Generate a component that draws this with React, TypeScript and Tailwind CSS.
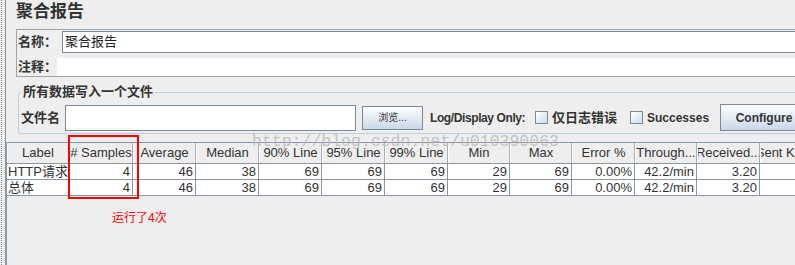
import { FC } from 'react'

interface Column {
    label: string;
    w: string;
    left?: boolean;
}

const columns: Column[] = [
    { label: 'Label', w: 'w-[62px]', left: true },
    { label: '# Samples', w: 'w-[64px]' },
    { label: 'Average', w: 'w-[63px]' },
    { label: 'Median', w: 'w-[63px]' },
    { label: '90% Line', w: 'w-[63px]' },
    { label: '95% Line', w: 'w-[63px]' },
    { label: '99% Line', w: 'w-[63px]' },
    { label: 'Min', w: 'w-[62px]' },
    { label: 'Max', w: 'w-[62px]' },
    { label: 'Error %', w: 'w-[63px]' },
    { label: 'Through...', w: 'w-[62px]' },
    { label: 'Received...', w: 'w-[63px]' },
    { label: 'Sent KB/sec', w: 'w-[63px]' },
];

const rows: string[][] = [
    ['HTTP请求', '4', '46', '38', '69', '69', '69', '29', '69', '0.00%', '42.2/min', '3.20', ''],
    ['总体', '4', '46', '38', '69', '69', '69', '29', '69', '0.00%', '42.2/min', '3.20', ''],
];

const font = "font-['Liberation_Sans','Noto_Sans_CJK_SC',sans-serif]";

const OceanButton: FC<{ label: string; className: string }> = ({ label, className }) => (
    <div
        className={`shrink-0 flex items-center justify-center border border-[#7a8a99] bg-gradient-to-b from-white to-[#c9d7ea] text-[#333] ${className}`}
    >
        {label}
    </div>
);

const CheckBox: FC = () => (
    <div className="shrink-0 w-[13px] h-[13px] border border-[#7a8a99] bg-gradient-to-br from-white to-[#cfdbeb]" />
);

const App: FC = () => {
    return (
        <div className={`relative w-[795px] h-[265px] overflow-hidden bg-[#eeeeee] flex ${font}`}>
            {/* dotted split pane edge */}
            <div className="shrink-0 ml-[1px] w-[4px] h-full border-l border-dotted border-[#8c8c8c]" />

            <div className="w-[830px] h-full shrink-0 border-l border-[#8a99a8] flex flex-col">
                <div className="pl-[10px] pr-0">
                    <h1 className="h-[29px] pt-[2px] text-[17px] leading-[20px] font-bold text-[#333]">聚合报告</h1>

                    {/* name / comment panel */}
                    <div className="border border-[#a3a3a3] pt-[1px] flex flex-col">
                        <div className="flex items-center h-[22px]">
                            <span className="w-[45px] pl-[1px] text-[13px] font-bold text-[#333]">名称：</span>
                            <div className="flex-1 h-[22px] bg-white border border-[#7a8a99] pl-[2px] text-[13px] leading-[20px] text-[#222]">
                                聚合报告
                            </div>
                        </div>
                        <div className="flex items-center mt-[5px] h-[18px]">
                            <span className="w-[40px] pl-[1px] text-[13px] font-bold text-[#333]">注释：</span>
                            <div className="flex-1 h-[18px] bg-white" />
                        </div>
                    </div>

                    {/* write results to file */}
                    <fieldset className="mt-[8px] ml-[2px] border border-[#b8cfe5] rounded-[3px] pb-[2px]">
                        <legend className="ml-[2px] px-[2px] text-[13px] leading-[14px] font-bold text-[#333]">
                            所有数据写入一个文件
                        </legend>
                        <div className="flex items-center h-[27px] mt-[5px] pl-[2px] text-[#333]">
                            <span className="shrink-0 w-[44px] text-[13px] font-bold">文件名</span>
                            <div className="shrink-0 w-[291px] h-[26px] bg-white border border-[#7a8a99]" />
                            <OceanButton label="浏览..." className="ml-[6px] w-[61px] h-[24px] text-[10px]" />
                            <span className="shrink-0 ml-[7px] w-[105px] text-[12px] font-bold tracking-[-0.4px]">Log/Display Only:</span>
                            <CheckBox />
                            <span className="shrink-0 ml-[4px] w-[78px] text-[13px] font-bold">仅日志错误</span>
                            <CheckBox />
                            <span className="shrink-0 ml-[4px] w-[73px] text-[12px] font-bold">Successes</span>
                            <OceanButton label="Configure" className="w-[88px] h-[27px] text-[12px] font-bold" />
                        </div>
                    </fieldset>
                </div>

                {/* results table */}
                <div className="mt-[8px] flex-1 border-l border-[#8a99a8] text-[13px] text-[#333]">
                    <div className="flex h-[22px] border-t border-b border-[#8a97a6]">
                        {columns.map((col) => (
                            <div
                                key={col.label}
                                className={`${col.w} shrink-0 flex items-center justify-center whitespace-nowrap overflow-hidden border-l border-white border-r border-r-[#a7b0ba] bg-[#eeeeee]`}
                            >
                                {col.label}
                            </div>
                        ))}
                    </div>
                    {rows.map((row, ri) => (
                        <div key={ri} className="flex h-[16px] border-b border-[#8a97a6] bg-white">
                            {row.map((cell, ci) => (
                                <div
                                    key={ci}
                                    className={`${columns[ci].w} shrink-0 h-[15px] leading-[15px] whitespace-nowrap overflow-hidden border-r border-[#8a97a6] ${
                                        columns[ci].left ? 'pl-[1px] text-left' : 'pr-[2px] text-right'
                                    }`}
                                >
                                    {cell}
                                </div>
                            ))}
                        </div>
                    ))}
                </div>
            </div>

            {/* blog watermark */}
            <div className="absolute left-[252px] top-[132px] z-10 font-['Liberation_Mono',monospace] text-[16.5px] leading-[20px] text-[#bcbcbc]/90 pointer-events-none">
                http://blog.csdn.net/u010390063
            </div>

            {/* red annotation */}
            <div className="absolute left-[68px] top-[135px] w-[71px] h-[64px] border-2 border-[#ff0000] z-20" />
            <div className="absolute left-[112px] top-[210px] text-[12px] leading-[16px] text-[#ff0000]">运行了4次</div>
        </div>
    );
};

export default App;
